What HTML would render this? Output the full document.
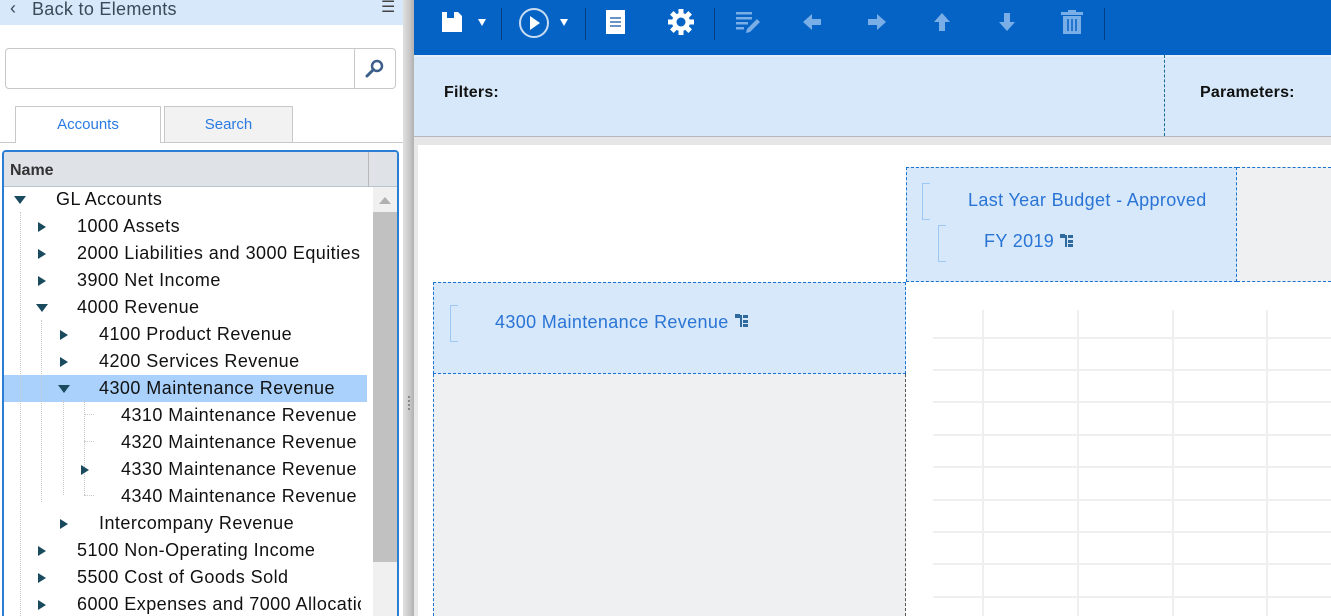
<!DOCTYPE html>
<html><head><meta charset="utf-8"><style>
*{margin:0;padding:0;box-sizing:border-box}
html,body{width:1331px;height:616px;overflow:hidden}
body{background:#fff;font-family:"Liberation Sans",sans-serif;position:relative}
.a{position:absolute}
.row{position:absolute;left:0;height:27px;font-size:18px;color:#111;line-height:27px;white-space:nowrap;letter-spacing:0.45px}
.tri{position:absolute;width:0;height:0}
.tr{border-top:5px solid transparent;border-bottom:5px solid transparent;border-left:8px solid #1a4a5e}
.td{border-left:6px solid transparent;border-right:6px solid transparent;border-top:8px solid #1a4a5e}
.dl{position:absolute;border-left:1px dotted #c8c8c8}
.dh{position:absolute;border-top:1px dotted #c8c8c8;width:10px}
.sep{position:absolute;top:8px;width:1px;height:32px;background:#033f80}
.gv{position:absolute;top:310px;bottom:0;width:2px;background:#efefef}
.gh{position:absolute;left:933px;right:0;height:2px;background:#efefef}
</style></head><body>
<div class="a" style="left:0;top:0;width:403px;height:25px;background:#d6e8f9"></div>
<div class="a" style="left:10px;top:-2px;font-size:18px;color:#3b4a5a">‹</div>
<div class="a" style="left:32px;top:-1px;font-size:18px;color:#3b4a5a;letter-spacing:0.3px">Back to Elements</div>
<div class="a" style="left:381px;top:-3px;font-size:16px;color:#444">☰</div>
<div class="a" style="left:5px;top:48px;width:391px;height:41px;border:1px solid #c8c8c8;border-radius:4px"></div>
<div class="a" style="left:354px;top:49px;width:1px;height:39px;background:#c8c8c8"></div>
<svg class="a" style="left:364px;top:58px" width="22" height="22" viewBox="0 0 22 22"><circle cx="13" cy="8" r="5" fill="none" stroke="#3b5e8a" stroke-width="2.5"/><line x1="9.5" y1="11.5" x2="3" y2="18" stroke="#3b5e8a" stroke-width="3" stroke-linecap="round"/></svg>
<div class="a" style="left:0;top:142px;width:403px;height:1px;background:#c8c8c8"></div>
<div class="a" style="left:15px;top:106px;width:146px;height:37px;border:1px solid #c8c8c8;border-bottom:none;background:#fff;text-align:center;line-height:36px;font-size:15px;color:#2a7ae2">Accounts</div>
<div class="a" style="left:164px;top:106px;width:129px;height:36px;border:1px solid #c8c8c8;border-bottom:none;background:#f2f2f2;text-align:center;line-height:36px;font-size:15px;color:#2a7ae2">Search</div>
<div class="a" style="left:2px;top:150px;width:397px;height:500px;border:2px solid #2a7fd4;border-radius:4px;overflow:hidden">
 <div class="a" style="left:0;top:0;width:393px;height:35px;background:#dfe3e8;border-bottom:1px solid #b8c4d0"></div>
 <div class="a" style="left:364px;top:0;width:1px;height:35px;background:#b8b8b8"></div>
 <div class="a" style="left:6px;top:10px;font-size:16px;font-weight:bold;color:#333">Name</div>
 <div class="a" style="left:369px;top:35px;width:24px;height:470px;background:#f0f0f0"></div>
 <div class="a" style="left:369px;top:60px;width:24px;height:350px;background:#c1c1c1"></div>
 <div class="tri a" style="left:375px;top:45px;border-left:6px solid transparent;border-right:6px solid transparent;border-bottom:7px solid #b0b0b0"></div>
</div>
<div class="a" style="left:4px;top:375px;width:363px;height:27px;background:#a9d1fb"></div>
<div class="dl" style="left:20px;top:212px;height:404px"></div>
<div class="dl" style="left:41px;top:320px;height:182px"></div>
<div class="dl" style="left:63px;top:400px;height:95px"></div>
<div class="dh" style="left:84px;top:414px"></div>
<div class="dh" style="left:84px;top:441px"></div>
<div class="dh" style="left:84px;top:495px"></div>
<div class="dl" style="left:84px;top:400px;height:95px"></div>

<div class="tri td" style="left:14px;top:196px"></div><div class="row" style="left:56px;top:186px">GL Accounts</div>
<div class="tri tr" style="left:38px;top:222px"></div><div class="row" style="left:77px;top:213px">1000 Assets</div>
<div class="tri tr" style="left:38px;top:249px"></div><div class="row" style="left:77px;top:240px">2000 Liabilities and 3000 Equities</div>
<div class="tri tr" style="left:38px;top:276px"></div><div class="row" style="left:77px;top:267px">3900 Net Income</div>
<div class="tri td" style="left:36px;top:304px"></div><div class="row" style="left:77px;top:294px">4000 Revenue</div>
<div class="tri tr" style="left:60px;top:330px"></div><div class="row" style="left:99px;top:321px">4100 Product Revenue</div>
<div class="tri tr" style="left:60px;top:357px"></div><div class="row" style="left:99px;top:348px">4200 Services Revenue</div>
<div class="tri td" style="left:58px;top:385px"></div><div class="row" style="left:99px;top:375px">4300 Maintenance Revenue</div>
<div class="row" style="left:121px;top:402px;width:240px;overflow:hidden">4310 Maintenance Revenue -</div>
<div class="row" style="left:121px;top:429px;width:240px;overflow:hidden">4320 Maintenance Revenue -</div>
<div class="tri tr" style="left:81px;top:465px"></div><div class="row" style="left:121px;top:456px;width:240px;overflow:hidden">4330 Maintenance Revenue -</div>
<div class="row" style="left:121px;top:483px;width:240px;overflow:hidden">4340 Maintenance Revenue -</div>
<div class="tri tr" style="left:60px;top:519px"></div><div class="row" style="left:99px;top:510px">Intercompany Revenue</div>
<div class="tri tr" style="left:38px;top:546px"></div><div class="row" style="left:77px;top:537px">5100 Non-Operating Income</div>
<div class="tri tr" style="left:38px;top:573px"></div><div class="row" style="left:77px;top:564px">5500 Cost of Goods Sold</div>
<div class="tri tr" style="left:38px;top:600px"></div><div class="row" style="left:77px;top:591px;width:284px;overflow:hidden">6000 Expenses and 7000 Allocations</div>

<div class="a" style="left:403px;top:0;width:11px;height:616px;background:linear-gradient(90deg,#e0e0e0,#c8c8c8 60%,#b0b0b0)"></div>
<div class="a" style="left:408px;top:396px;width:2px;height:14px;border-left:2px dotted #888"></div>

<div class="a" style="left:414px;top:0;width:917px;height:55px;background:#0563c5"></div>
<svg class="a" style="left:440px;top:10px" width="24" height="24" viewBox="0 0 24 24"><path d="M2 2h5v6h7V2h4l4 4v16H2z" fill="#fff"/></svg>
<div class="tri a" style="left:478px;top:19px;border-left:4px solid transparent;border-right:4px solid transparent;border-top:7px solid #fff"></div>
<div class="sep" style="left:501px"></div>
<svg class="a" style="left:517px;top:7px" width="34" height="32" viewBox="0 0 34 32"><circle cx="17" cy="16" r="14" fill="none" stroke="#c8dcf2" stroke-width="2"/><path d="M13 9l10 7-10 7z" fill="#fff"/></svg>
<div class="tri a" style="left:560px;top:19px;border-left:4px solid transparent;border-right:4px solid transparent;border-top:7px solid #fff"></div>
<div class="sep" style="left:585px"></div>
<svg class="a" style="left:606px;top:10px" width="20" height="24" viewBox="0 0 20 24"><rect x="0" y="0" width="19" height="24" fill="#fff"/><path d="M4 8h11M4 12h11M4 16h11" stroke="#3a6fb0" stroke-width="1.6"/></svg>
<svg class="a" style="left:668px;top:9px" width="26" height="26" viewBox="0 0 26 26"><g fill="#fff"><circle cx="13" cy="13" r="9"/><rect x="10.5" y="0" width="5" height="26"/><rect x="0" y="10.5" width="26" height="5"/><rect x="10.5" y="0" width="5" height="26" transform="rotate(45 13 13)"/><rect x="10.5" y="0" width="5" height="26" transform="rotate(-45 13 13)"/></g><circle cx="13" cy="13" r="4.5" fill="#0563c5"/></svg>
<div class="sep" style="left:714px"></div>
<svg class="a" style="left:735px;top:11px" width="26" height="24" viewBox="0 0 26 24"><g fill="#7aaee6"><rect x="1" y="1" width="16" height="2.5"/><rect x="1" y="6" width="16" height="2.5"/><rect x="1" y="11" width="12" height="2.5"/><rect x="1" y="16" width="8" height="2.5"/><path d="M22 8l3 3-10 10-4 1 1-4z"/></g></svg>
<svg class="a" style="left:802px;top:12px" width="20" height="20" viewBox="0 0 20 20"><path d="M1 10l9-8v5h9v6h-9v5z" fill="#7aaee6"/></svg>
<svg class="a" style="left:867px;top:12px" width="20" height="20" viewBox="0 0 20 20"><path d="M19 10l-9-8v5H1v6h9v5z" fill="#7aaee6"/></svg>
<svg class="a" style="left:932px;top:12px" width="20" height="20" viewBox="0 0 20 20"><path d="M10 1l8 9h-5v9H7v-9H2z" fill="#7aaee6"/></svg>
<svg class="a" style="left:997px;top:12px" width="20" height="20" viewBox="0 0 20 20"><path d="M10 19l8-9h-5V1H7v9H2z" fill="#7aaee6"/></svg>
<svg class="a" style="left:1061px;top:10px" width="22" height="24" viewBox="0 0 22 24"><g fill="#7aaee6"><rect x="7" y="0" width="8" height="2"/><rect x="0" y="2" width="22" height="3"/><path d="M2 6h18v18H2z"/></g><path d="M7 9v12M11 9v12M15 9v12" stroke="#0563c5" stroke-width="1.5"/></svg>
<div class="sep" style="left:1104px"></div>

<div class="a" style="left:414px;top:55px;width:917px;height:82px;background:#d6e8f9;border-bottom:1px solid #b5b9be"></div>
<div class="a" style="left:414px;top:55px;width:917px;height:2px;background:#e4effb"></div>
<div class="a" style="left:444px;top:84px;font-size:16px;font-weight:bold;color:#111;letter-spacing:0.2px">Filters:</div>
<div class="a" style="left:1164px;top:55px;height:81px;border-left:1px dashed #1a6b94"></div>
<div class="a" style="left:1200px;top:84px;font-size:16px;font-weight:bold;color:#111;letter-spacing:0.2px">Parameters:</div>
<div class="a" style="left:414px;top:137px;width:917px;height:8px;background:#e6e6e6"></div>
<div class="a" style="left:414px;top:145px;width:4px;height:471px;background:#e8e8e8"></div>

<div class="a" style="left:906px;top:167px;width:331px;height:115px;background:#d6e8f9;border:1px dashed #1a73d1"></div>
<div class="a" style="left:1237px;top:167px;width:94px;height:115px;background:#eff0f2;border-top:1px dashed #1a73d1;border-bottom:1px dashed #1a73d1"></div>
<div class="a" style="left:922px;top:183px;width:8px;height:37px;border:1px solid #9cc8f5;border-right:none"></div>
<div class="a" style="left:938px;top:225px;width:8px;height:37px;border:1px solid #9cc8f5;border-right:none"></div>
<div class="a" style="left:968px;top:190px;font-size:18px;color:#2a74d6;letter-spacing:0.35px">Last Year Budget - Approved</div>
<div class="a" style="left:984px;top:231px;font-size:18px;color:#2a74d6;letter-spacing:0.35px">FY 2019</div>
<svg class="a" style="left:1060px;top:234px" width="14" height="14" viewBox="0 0 14 14"><g fill="#2f6a9e"><rect x="0" y="0" width="5" height="4"/><rect x="8" y="1" width="5" height="3"/><rect x="8" y="6" width="5" height="3"/><rect x="8" y="10" width="5" height="3"/><rect x="5" y="1" width="2" height="12"/></g></svg>

<div class="a" style="left:433px;top:282px;width:473px;height:92px;background:#d6e8f9;border:1px dashed #1a73d1"></div>
<div class="a" style="left:433px;top:374px;width:473px;height:242px;background:#eff0f2;border-left:1px dashed #1a73d1;border-right:1px dashed #555"></div>
<div class="a" style="left:450px;top:305px;width:8px;height:37px;border:1px solid #9cc8f5;border-right:none"></div>
<div class="a" style="left:495px;top:312px;font-size:18px;color:#2a74d6;letter-spacing:0.35px">4300 Maintenance Revenue</div>
<svg class="a" style="left:735px;top:314px" width="14" height="14" viewBox="0 0 14 14"><g fill="#2f6a9e"><rect x="0" y="0" width="5" height="4"/><rect x="8" y="1" width="5" height="3"/><rect x="8" y="6" width="5" height="3"/><rect x="8" y="10" width="5" height="3"/><rect x="5" y="1" width="2" height="12"/></g></svg>

<div class="gv" style="left:982px"></div><div class="gv" style="left:1077px"></div><div class="gv" style="left:1172px"></div><div class="gv" style="left:1266px"></div>
<div class="gh" style="top:337px"></div><div class="gh" style="top:369px"></div><div class="gh" style="top:401px"></div><div class="gh" style="top:434px"></div><div class="gh" style="top:466px"></div><div class="gh" style="top:499px"></div><div class="gh" style="top:531px"></div><div class="gh" style="top:563px"></div><div class="gh" style="top:596px"></div>
</body></html>
